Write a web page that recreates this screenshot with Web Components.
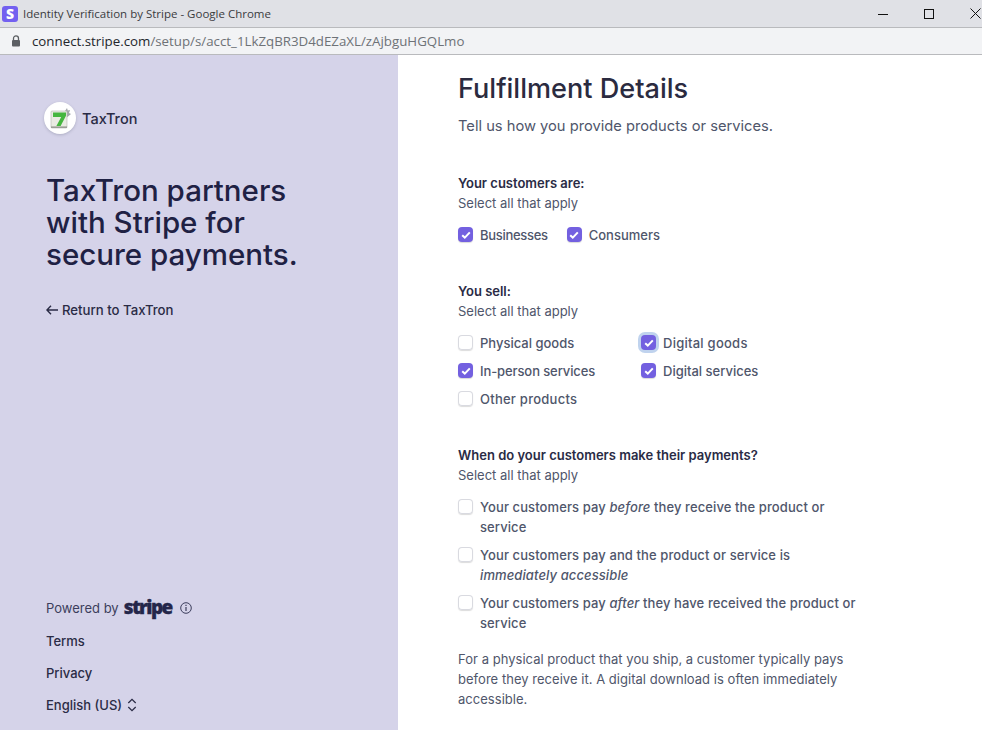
<!DOCTYPE html>
<html>
<head>
<meta charset="utf-8">
<title>Identity Verification by Stripe</title>
<style>
  html, body { margin: 0; height: 730px; overflow: hidden; background: #fff; }
  body { font-family: Inter, "Liberation Sans", sans-serif; display: flex; flex-direction: column; }
  i { font-style: italic; }
</style>
</head>
<body>
<browser-bar></browser-bar>
<main-layout>
  <side-panel slot="side"></side-panel>
  <fulfillment-form slot="main"></fulfillment-form>
</main-layout>

<script>
class BrowserBar extends HTMLElement {
  connectedCallback() {
    this.attachShadow({ mode: 'open' });
    this.shadowRoot.innerHTML = `
      <style>
        :host { display: block; flex: none; font-family: "Open Sans", sans-serif; }
        .title {
          height: 27px; background: #e0e1e6; border-bottom: 1px solid #b9babd;
          display: flex; align-items: center; padding-left: 2px;
          font-size: 11.5px; color: #3a3b3e;
        }
        .fav {
          width: 16px; height: 16px; border-radius: 3px; background: #7360f0; color: #fff;
          font: 800 14px "Open Sans", sans-serif; display: flex; align-items: center; justify-content: center;
          margin-right: 5px;
        }
        .controls { margin-left: auto; display: flex; align-items: center; }
        .controls svg { display: block; }
        .url {
          height: 26px; background: #f2f3f5; border-bottom: 1px solid #b9babd;
          display: flex; align-items: center; padding-left: 11px;
          font-size: 13.3px; color: #22262c;
        }
        .url svg { margin-right: 11px; }
        .url span { color: #6e7277; }
      </style>
      <div class="title">
        <div class="fav">S</div>Identity Verification by Stripe - Google Chrome
        <div class="controls">
          <svg width="10" height="10" viewBox="0 0 10 10" style="margin-right:36px"><path d="M0 5.5h10" stroke="#111" fill="none"/></svg>
          <svg width="10" height="10" viewBox="0 0 10 10" style="margin-right:36px"><rect x=".5" y=".5" width="9" height="9" stroke="#111" fill="none"/></svg>
          <svg width="11" height="11" viewBox="0 0 11 11" style="margin-right:1px"><path d="M.5.5l10 10M10.5.5l-10 10" stroke="#111" fill="none"/></svg>
        </div>
      </div>
      <div class="url">
        <svg width="10" height="12" viewBox="0 0 10 12"><path d="M2.5 5V3.4a2.5 2.5 0 0 1 5 0V5" stroke="#5c5f63" stroke-width="1.3" fill="none"/><rect x="1" y="5" width="8" height="6.5" rx="1" fill="#5c5f63"/></svg>
        connect.stripe.com<span>/setup/s/acct_1LkZqBR3D4dEZaXL/zAjbguHGQLmo</span>
      </div>`;
  }
}
customElements.define('browser-bar', BrowserBar);

class MainLayout extends HTMLElement {
  connectedCallback() {
    this.attachShadow({ mode: 'open' });
    this.shadowRoot.innerHTML = `
      <style>
        :host { display: flex; flex: 1; min-height: 0; }
        .side { display: flex; flex: none; width: 398px; background: #d5d3e9; }
        .main { flex: 1; min-width: 0; padding-left: 60px; background: #fff; }
      </style>
      <div class="side"><slot name="side"></slot></div>
      <div class="main"><slot name="main"></slot></div>`;
  }
}
customElements.define('main-layout', MainLayout);

class SidePanel extends HTMLElement {
  connectedCallback() {
    this.attachShadow({ mode: 'open' });
    this.shadowRoot.innerHTML = `
      <style>
        :host {
          display: flex; flex-direction: column; flex: 1; box-sizing: border-box;
          padding: 47px 0 15px 46px; color: #2a2b45; font-size: 13px; font-weight: 500;
        }
        .brand { display: flex; align-items: center; gap: 6px; margin-left: -2px; height: 32px; font-size: 14.5px; }
        .logo {
          width: 32px; height: 32px; border-radius: 50%; background: #fff;
          box-shadow: 0 1px 3px rgba(60,66,87,.25); display: flex; align-items: center; justify-content: center;
        }
        h1 { margin: 40px 0 0; font-size: 29.5px; line-height: 32px; font-weight: 500; color: #1f2144; }
        .back { display: flex; align-items: center; gap: 4px; margin-top: 30px; line-height: 20px; font-size: 13.2px; }
        .foot { margin-top: auto; display: flex; flex-direction: column; gap: 12px; }
        .foot div { display: flex; align-items: center; line-height: 20px; }
        .foot .powered { font-weight: 400; color: #3c3e5c; margin-bottom: 1px; }
        .word {
          font: 800 19px/20px "Open Sans", sans-serif; letter-spacing: -1.6px; color: #24264a;
          -webkit-text-stroke: .3px #24264a; margin: -2px 8px 0 5px;
        }
      </style>
      <div class="brand">
        <div class="logo">
          <svg width="24" height="24" viewBox="0 0 24 24">
            <path d="M15 8l4-6 .8 2.6L22 4l-1 3 2 1-6 5z" fill="#a3a7ab"/>
            <rect x="3" y="5" width="16" height="17" rx="1" fill="#e9ebe2" stroke="#b4b7ae" stroke-width=".6"/>
            <path d="M5 6.5h13v3.2L12.6 20H8.4l4.8-9H5z" fill="#45b63f"/>
            <path d="M3 20.4h16V22H3z" fill="#9b9e96"/>
          </svg>
        </div>
        TaxTron
      </div>
      <h1>TaxTron partners<br>with Stripe for<br>secure payments.</h1>
      <div class="back">
        <svg width="12" height="10" viewBox="0 0 12 10"><path d="M5 .7L.9 5 5 9.3M1 5h11" stroke="#2a2b45" stroke-width="1.4" fill="none"/></svg>
        Return to TaxTron
      </div>
      <div class="foot">
        <div class="powered">Powered by <span class="word">stripe</span>
          <svg width="12" height="12" viewBox="0 0 12 12"><circle cx="6" cy="6" r="5.3" stroke="#3c3e5c" fill="none"/><path d="M6 5v4M6 2.8v1.2" stroke="#3c3e5c" stroke-width="1.2"/></svg>
        </div>
        <div>Terms</div>
        <div>Privacy</div>
        <div>English (US)
          <svg width="10" height="14" viewBox="0 0 10 14" style="margin-left:5px"><path d="M1.3 5L5 1.4 8.7 5M1.3 9L5 12.6 8.7 9" stroke="#2a2b45" stroke-width="1.3" fill="none"/></svg>
        </div>
      </div>`;
  }
}
customElements.define('side-panel', SidePanel);

class CheckOption extends HTMLElement {
  connectedCallback() {
    this.attachShadow({ mode: 'open' });
    const checked = this.hasAttribute('checked');
    this.shadowRoot.innerHTML = `
      <style>
        :host { display: flex; align-items: flex-start; gap: 7px; font-size: 13px; line-height: 20px; font-weight: 500; color: #4f566b; }
        .box {
          flex: none; box-sizing: border-box; width: 15px; height: 15px; margin-top: 2px; border-radius: 4px;
          background: #fff; box-shadow: inset 0 0 0 1px #d9dae0, 0 1px 1px rgba(0,0,0,.14);
          display: flex; align-items: center; justify-content: center;
        }
        :host([checked]) .box { background: #7360e0; box-shadow: 0 1px 1px rgba(0,0,0,.15); }
        :host([focused]) .box { box-shadow: 0 0 0 3px #c0d3ee; }
      </style>
      <div class="box">${checked ? '<svg width="10" height="8" viewBox="0 0 10 8"><path d="M1.2 4.2l2.6 2.4L8.8 1.4" stroke="#fff" stroke-width="2" fill="none"/></svg>' : ''}</div>
      <div><slot></slot></div>`;
  }
}
customElements.define('check-option', CheckOption);

class FieldGroup extends HTMLElement {
  connectedCallback() {
    this.attachShadow({ mode: 'open' });
    this.shadowRoot.innerHTML = `
      <style>
        :host { display: block; margin-bottom: 36px; }
        .label { font-size: 13px; line-height: 20px; font-weight: 600; color: #2a2b45; }
        .hint { font-size: 13px; line-height: 20px; color: #4f566b; margin-bottom: 12px; }
      </style>
      <div class="label">${this.getAttribute('label')}</div>
      <div class="hint">Select all that apply</div>
      <slot></slot>`;
  }
}
customElements.define('field-group', FieldGroup);

class FulfillmentForm extends HTMLElement {
  connectedCallback() {
    this.attachShadow({ mode: 'open' });
    this.shadowRoot.innerHTML = `
      <style>
        :host { display: block; width: 400px; color: #2a2b45; }
        h2 { margin: 16px 0 0; font-size: 27.1px; line-height: 36px; font-weight: 500; color: #2b2b40; }
        .sub { margin: 9px 0 37px; font-size: 14.7px; line-height: 20px; color: #4f566b; }
        .row { display: flex; gap: 19px; }
        .row check-option:first-child { letter-spacing: -.3px; }
        .grid { display: grid; grid-template-columns: 183px auto; row-gap: 8px; justify-content: start; }
        .wide { letter-spacing: .25px; }
        .tight { letter-spacing: -.1px; }
        .stack { display: flex; flex-direction: column; gap: 8px; letter-spacing: .1px; }
        .note { font-size: 13px; line-height: 20px; letter-spacing: .03px; color: #4f566b; margin: 16px 0 0; }
        field-group.last { margin-bottom: 0; }
      </style>
      <h2>Fulfillment Details</h2>
      <p class="sub">Tell us how you provide products or services.</p>
      <field-group label="Your customers are:">
        <div class="row">
          <check-option checked>Businesses</check-option>
          <check-option checked>Consumers</check-option>
        </div>
      </field-group>
      <field-group label="You sell:">
        <div class="grid">
          <check-option>Physical goods</check-option>
          <check-option checked focused class="wide">Digital goods</check-option>
          <check-option checked class="tight">In-person services</check-option>
          <check-option checked>Digital services</check-option>
          <check-option class="wide">Other products</check-option>
        </div>
      </field-group>
      <field-group class="last" label="When do your customers make their payments?">
        <div class="stack">
          <check-option>Your customers pay <i>before</i> they receive the product or service</check-option>
          <check-option>Your customers pay and the product or service is <i>immediately accessible</i></check-option>
          <check-option>Your customers pay <i>after</i> they have received the product or service</check-option>
        </div>
      </field-group>
      <p class="note">For a physical product that you ship, a customer typically pays before they receive it. A digital download is often immediately accessible.</p>`;
  }
}
customElements.define('fulfillment-form', FulfillmentForm);
</script>
</body>
</html>
